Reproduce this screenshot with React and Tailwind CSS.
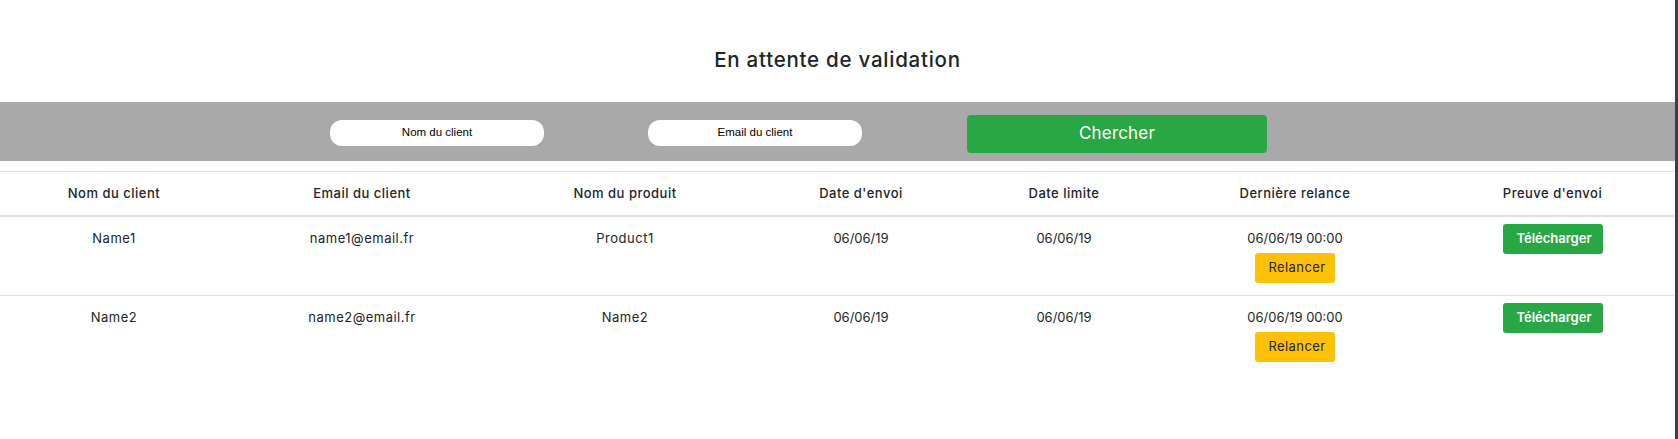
import React from "react";

const rows = [
  { nom: "Name1", email: "name1@email.fr", produit: "Product1" },
  { nom: "Name2", email: "name2@email.fr", produit: "Name2" },
];

const cols = "grid grid-cols-[228px_268px_258px_214px_192px_270px_245px]";
const headers = [
  "Nom du client",
  "Email du client",
  "Nom du produit",
  "Date d'envoi",
  "Date limite",
  "Dernière relance",
  "Preuve d'envoi",
];

export default function App() {
  return (
    <div
      className="flex w-[1678px] h-[439px] bg-white text-[#212529]"
      style={{ fontFamily: "Inter, 'DejaVu Sans', sans-serif" }}
    >
      <div className="w-[1675px] flex flex-col">
        <div className="h-[102px] flex justify-center items-start pt-[46px]">
          <h1 className="text-[20.5px] leading-[28px] font-medium tracking-[0.75px]">
            En attente de validation
          </h1>
        </div>
        <div className="h-[59px] bg-[#a9a9a9] flex items-start pl-[330px]">
          <div
            className="mt-[18px] w-[214px] h-[26px] bg-white rounded-[12px] flex items-center justify-center text-[11.5px] text-black"
            style={{ fontFamily: "'Liberation Sans', Arial, sans-serif" }}
          >
            Nom du client
          </div>
          <div
            className="mt-[18px] ml-[104px] w-[214px] h-[26px] bg-white rounded-[12px] flex items-center justify-center text-[11.5px] text-black"
            style={{ fontFamily: "'Liberation Sans', Arial, sans-serif" }}
          >
            Email du client
          </div>
          <button className="mt-[13px] ml-[105px] w-[300px] h-[38px] bg-[#28a745] rounded-[4px] text-white text-[17px] font-normal tracking-[0.2px]">
            Chercher
          </button>
        </div>
        <div className="mt-[10px]">
          <div
            className={`${cols} border-t border-[#dee2e6] border-b-2 text-[13px] font-medium tracking-[0.5px]`}
          >
            {headers.map((h) => (
              <div key={h} className="text-center py-[11px] leading-[21px]">
                {h}
              </div>
            ))}
          </div>
          {rows.map((r, i) => (
            <div
              key={i}
              className={`${cols} text-[13px] ${i === 0 ? "border-b border-[#dee2e6]" : ""}`}
            >
              <div className="text-center pt-[7px] leading-[29px] tracking-[0.5px]">{r.nom}</div>
              <div className="text-center pt-[7px] leading-[29px] tracking-[0.5px]">{r.email}</div>
              <div className="text-center pt-[7px] leading-[29px] tracking-[0.5px]">{r.produit}</div>
              <div className="text-center pt-[7px] leading-[29px]">06/06/19</div>
              <div className="text-center pt-[7px] leading-[29px]">06/06/19</div>
              <div className="flex flex-col items-center pt-[7px] pb-[12px]">
                <span className="leading-[29px]">06/06/19 00:00</span>
                <button className="w-[80px] h-[30px] bg-[#ffc107] rounded-[3px] text-[13px] text-[#212529] pl-[4px] tracking-[0.4px]">
                  Relancer
                </button>
              </div>
              <div className="flex justify-center pt-[7px]">
                <button className="w-[100px] h-[30px] bg-[#28a745] rounded-[3px] text-[13px] font-semibold text-white pl-[3px]">
                  Télécharger
                </button>
              </div>
            </div>
          ))}
        </div>
      </div>
      <div className="w-[3px] h-full bg-[#3e3e46]" />
    </div>
  );
}
